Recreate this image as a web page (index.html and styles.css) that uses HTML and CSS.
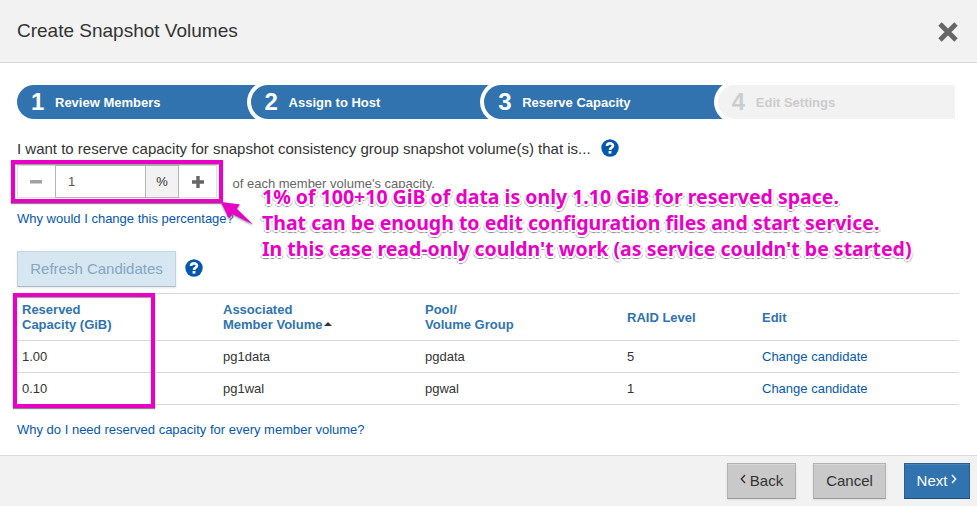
FILE: index.html
```
<!DOCTYPE html>
<html lang="en">
<head>
<meta charset="utf-8">
<title>Create Snapshot Volumes</title>
<link rel="stylesheet" href="styles.css">
</head>
<body>
<div class="dialog">
  <header class="header">
    <h1>Create Snapshot Volumes</h1>
    <svg class="close" width="20" height="20" viewBox="0 0 20 20"><path d="M2 2L18 18M18 2L2 18" stroke="#666" stroke-width="4.8" fill="none"/></svg>
  </header>
  <main class="content">
    <ol class="steps">
      <li class="step"><b>1</b><span>Review Members</span></li>
      <li class="step"><b>2</b><span>Assign to Host</span></li>
      <li class="step"><b>3</b><span>Reserve Capacity</span></li>
      <li class="step disabled"><b>4</b><span>Edit Settings</span></li>
    </ol>
    <div class="question">
      <span>I want to reserve capacity for snapshot consistency group snapshot volume(s) that is...</span>
      <svg class="help" width="18" height="18" viewBox="0 0 18 18"><circle cx="9" cy="9" r="8.7" fill="#0557ae"/><path d="M6 7C6.1 3.5 12 3.6 12 6.7C12 8.7 9 8.5 9 10.9" fill="none" stroke="#fff" stroke-width="2.6"/><rect x="7.6" y="12" width="2.8" height="2.6" fill="#fff"/></svg>
    </div>
    <div class="amount">
      <div class="spinner">
        <span class="cell minus"><svg width="12" height="12" viewBox="0 0 12 12"><rect y="4" width="12" height="3.6" rx=".6" fill="#a0a0a0"/></svg></span>
        <span class="cell value">1</span>
        <span class="cell unit">%</span>
        <span class="cell plus"><svg width="12" height="12" viewBox="0 0 12 12"><path d="M0 6H12M6 0V12" stroke="#666" stroke-width="3.4"/></svg></span>
      </div>
      <span class="caption">of each member volume's capacity.</span>
    </div>
    <a class="link why">Why would I change this percentage?</a>
    <div class="refresh">
      <button class="btn pale">Refresh Candidates</button>
      <svg class="help" width="18" height="18" viewBox="0 0 18 18"><circle cx="9" cy="9" r="8.7" fill="#0557ae"/><path d="M6 7C6.1 3.5 12 3.6 12 6.7C12 8.7 9 8.5 9 10.9" fill="none" stroke="#fff" stroke-width="2.6"/><rect x="7.6" y="12" width="2.8" height="2.6" fill="#fff"/></svg>
    </div>
    <div class="table">
      <div class="row head"><span>Reserved<br>Capacity (GiB)</span><span>Associated<br>Member Volume<i class="sort"></i></span><span>Pool/<br>Volume Group</span><span>RAID Level</span><span>Edit</span></div>
      <div class="row"><span>1.00</span><span>pg1data</span><span>pgdata</span><span>5</span><a class="link">Change candidate</a></div>
      <div class="row"><span>0.10</span><span>pg1wal</span><span>pgwal</span><span>1</span><a class="link">Change candidate</a></div>
    </div>
    <a class="link need">Why do I need reserved capacity for every member volume?</a>
  </main>
  <footer class="footer">
    <button class="btn back"><svg width="6" height="10" viewBox="0 0 6 10"><path d="M5 1L1.3 5L5 9" fill="none" stroke="#333" stroke-width="1.4"/></svg>Back</button>
    <button class="btn cancel">Cancel</button>
    <button class="btn next">Next<svg width="6" height="10" viewBox="0 0 6 10"><path d="M1 1L4.7 5L1 9" fill="none" stroke="#fff" stroke-width="1.4"/></svg></button>
  </footer>
  <div class="mark mark-amount"></div>
  <div class="mark mark-column"></div>
  <svg class="arrow" width="40" height="32" viewBox="0 0 40 32"><path d="M3 2L22 4.5L18.5 8.5L35 24.5L14.5 14L11 18.5Z" fill="#e800c4"/></svg>
  <div class="note">
    <p>1% of 100+10 GiB of data is only 1.10 GiB for reserved space.</p>
    <p>That can be enough to edit configuration files and start service.</p>
    <p>In this case read-only couldn't work (as service couldn't be started)</p>
  </div>
</div>
</body>
</html>
```
FILE: styles.css
```
* { box-sizing: border-box; }
body { margin: 0; background: #fff; color: #333; font: 13px/15px "Liberation Sans", Arial, sans-serif; }
.dialog { position: relative; width: 977px; height: 506px; overflow: hidden; display: flex; flex-direction: column; }
.header { height: 63px; flex: none; display: flex; align-items: center; justify-content: space-between; padding: 0 19px 0 17px; background: #f2f2f2; border-bottom: 1px solid #d9d9d9; }
h1 { margin: 0; font-size: 19px; font-weight: normal; line-height: 22px; }
.close { margin-top: 2px; }
.content { flex: 1; padding: 22px 18px 0 17px; display: flex; flex-direction: column; align-items: flex-start; }
.steps { display: flex; list-style: none; margin: 0; padding: 0; width: 938px; height: 34px; overflow: hidden; }
.step { flex: 0 0 250.6px; display: flex; align-items: center; padding-left: 14px; background: #3073ae; color: #fff; border-radius: 17px 0 0 17px; font-weight: bold; margin-right: -17px; position: relative; }
.step + .step { box-shadow: 0 0 0 4px #fff; }
.step.disabled { background: #f2f2f2; color: #ccc; }
.step b { width: 24px; font-size: 24px; line-height: 34px; }
.step span { padding-top: 1px; }
.question { height: 18px; margin-top: 20px; display: flex; align-items: center; gap: 10px; font-size: 15px; }
.help { display: block; flex: none; }
.amount { height: 33px; margin-top: 8px; display: flex; align-items: center; gap: 15.5px; }
.spinner { width: 200px; height: 33px; display: flex; border: 1px solid #e0e0e0; }
.cell { display: flex; align-items: center; justify-content: center; color: #555; margin: -1px 0; }
.minus { width: 37px; padding-right: 1px; }
.value { width: 91px; justify-content: flex-start; padding-left: 12px; border: 1px solid #b5b5b5; }
.unit { width: 33px; background: #f2f2f2; border: 1px solid #b5b5b5; border-left-width: 0; color: #333; }
.plus { flex: 1; }
.caption { padding-top: 4px; color: #666; }
.link { color: #0557ae; }
.why { margin-top: 13px; }
.refresh { display: flex; align-items: center; gap: 9px; margin-top: 25px; }
.refresh .help { margin-top: -2px; }
.btn { height: 36px; padding: 0; display: flex; align-items: center; justify-content: center; border: 1px solid #b3b3b3; border-bottom-color: #999; background: #c9c9c9; box-shadow: inset 0 1px #d7d7d7, 0 1px 2px #ddd; color: #333; font: 15px/18px "Liberation Sans", Arial, sans-serif; }
.pale { width: 159px; background: #d6e7f1; border-color: #c2d4df #c2d4df #a9bbc7; box-shadow: 0 1px 2px #e5e5e5; color: #84a6c4; }
.table { width: 942px; margin-top: 6px; border-top: 1px solid #d9d9d9; }
.row { display: grid; grid-template-columns: 201px 202px 202px 135px 1fr; align-items: center; height: 32px; padding-left: 5px; border-bottom: 1px solid #d9d9d9; }
.row.head { height: 47px; color: #3073ae; font-weight: bold; }
.sort { display: inline-block; margin: 0 0 3px 2px; border: 4px solid transparent; border-top: 0; border-bottom-color: #333; }
.need { margin-top: 17px; }
.footer { height: 51px; flex: none; display: flex; align-items: flex-start; justify-content: flex-end; padding: 7px 7px 0; background: #f2f2f2; border-top: 1px solid #d9d9d9; }
.back { width: 69px; gap: 4px; margin-right: 17px; }
.cancel { width: 73px; margin-right: 18px; }
.next { width: 66px; gap: 4px; background: #3073ae; border-color: #275f92 #275f92 #204f7b; color: #fff; box-shadow: inset 0 1px #4883b6; }
.btn svg { margin-top: -4px; }
.mark { position: absolute; border: 4px solid #e800c4; box-shadow: 0 1px 1px #888, inset 0 1px 1px #999; }
.mark-amount { left: 11px; top: 160px; width: 212px; height: 43px; }
.mark-column { left: 13px; top: 293px; width: 142px; height: 115px; }
.arrow { position: absolute; left: 218px; top: 200px; filter: drop-shadow(0 1px 1px #777); }
.note { position: absolute; left: 262px; top: 184px; color: #e800c4; font: bold 19.5px/26px "Noto Sans", sans-serif; white-space: nowrap; text-shadow: 1px 0 #fff, -1px 0 #fff, 0 1px #fff, 0 -1px #fff, 1px 1px #fff, -1px -1px #fff, 1px -1px #fff, -1px 1px #fff, 2px 0 #fff, -2px 0 #fff, 0 2px #fff, 0 -2px #fff, 1px 2px #fff, -1px 2px #fff, 0 3px 1px #888, 2px 2px 1px #aaa, -2px 2px 1px #aaa; }
.note p { margin: 0; width: max-content; }
```
